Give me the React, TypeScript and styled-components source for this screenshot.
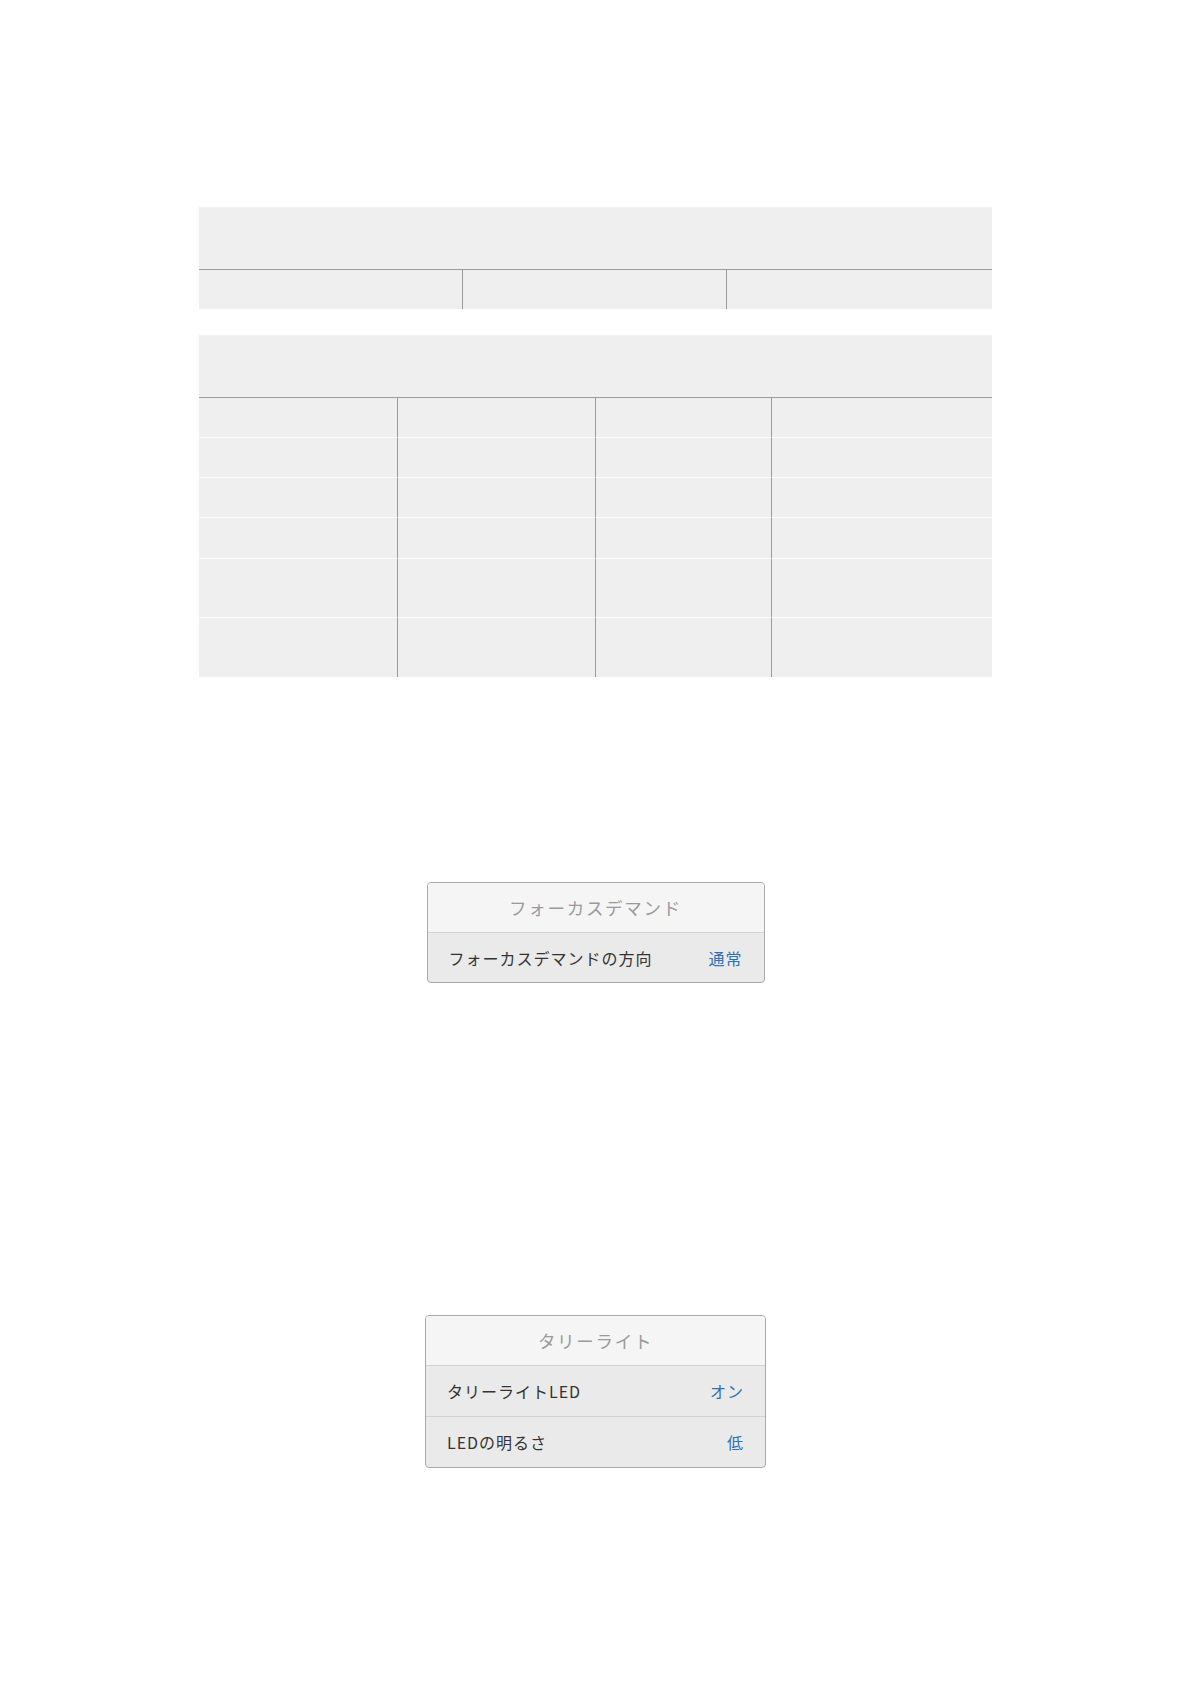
import styled, { createGlobalStyle } from "styled-components";
import { FC } from "react";

const GlobalStyle = createGlobalStyle`
    html, body {
        margin: 0;
        padding: 0;
        background: #ffffff;
    }
    body {
        font-family: "Noto Sans CJK JP", "Noto Sans", sans-serif;
    }
`

const topTable = { cols: [264, 264, 265], rows: [39] }
const bottomTable = { cols: [199, 198, 176, 220], rows: [39, 39, 39, 40, 58, 59] }

const focusRows = [{ label: "フォーカスデマンドの方向", value: "通常" }]
const tallyRows = [
    { label: "タリーライトLED", value: "オン" },
    { label: "LEDの明るさ", value: "低" },
]

const BlankTable: FC<{ cols: number[], rows: number[] }> = ({ cols, rows }) => (<Table>
    <TableHead />
    <TableBody $cols={cols}>
        {rows.map((h, r) => cols.map((_, c) => (
            <Cell key={`${r}-${c}`} $height={h} $first={r === 0} $last={c === cols.length - 1} />
        )))}
    </TableBody>
</Table>)

const MenuPanel: FC<{ title: string, width: number, rowHeight: number, rows: { label: string, value: string }[] }> = ({ title, width, rowHeight, rows }) => (
    <Panel $width={width}>
        <PanelTitle>{title}</PanelTitle>
        {rows.map(row => (
            <PanelRow key={row.label} $height={rowHeight}>
                <RowLabel>{row.label}</RowLabel>
                <RowValue>{row.value}</RowValue>
            </PanelRow>
        ))}
    </Panel>
)

export default function App() {
    return (<Page>
        <GlobalStyle />
        <BlankTable cols={topTable.cols} rows={topTable.rows} />
        <Spacer $h={26} />
        <BlankTable cols={bottomTable.cols} rows={bottomTable.rows} />
        <Spacer $h={205} />
        <MenuPanel title="フォーカスデマンド" width={338} rowHeight={49} rows={focusRows} />
        <Spacer $h={332} />
        <MenuPanel title="タリーライト" width={341} rowHeight={50} rows={tallyRows} />
    </Page>)
}

const Page = styled.div`
    width: 1191px;
    min-height: 1684px;
    box-sizing: border-box;
    padding-top: 207px;
    display: flex;
    flex-direction: column;
    align-items: center;
`

const Spacer = styled.div<{ $h: number }>`
    height: ${p => p.$h}px;
    flex-shrink: 0;
`

const Table = styled.div`
    width: 793px;
    background: #efefef;
    display: flex;
    flex-direction: column;
`

const TableHead = styled.div`
    height: 62px;
    border-bottom: 1px solid #9c9c9c;
`

const TableBody = styled.div<{ $cols: number[] }>`
    display: grid;
    grid-template-columns: ${p => p.$cols.map(c => `${c}px`).join(" ")};
`

const Cell = styled.div<{ $height: number, $first: boolean, $last: boolean }>`
    height: ${p => p.$height}px;
    border-top: ${p => p.$first ? "none" : "1px solid #fafafa"};
    border-right: ${p => p.$last ? "none" : "1px solid #9a9a9a"};
`

const Panel = styled.div<{ $width: number }>`
    width: ${p => p.$width}px;
    box-sizing: border-box;
    border: 1px solid #a9a9a9;
    border-radius: 4px;
    overflow: hidden;
    background: #eaeaea;
`

const PanelTitle = styled.div`
    height: 49px;
    background: #f5f5f5;
    display: flex;
    align-items: center;
    justify-content: center;
    font-size: 17.5px;
    letter-spacing: 1.7px;
    color: #9a9a9a;
`

const PanelRow = styled.div<{ $height: number }>`
    height: ${p => p.$height}px;
    border-top: 1px solid #d2d2d2;
    padding: 0 21px 0 21px;
    display: flex;
    align-items: center;
    justify-content: space-between;
    font-size: 16px;
    letter-spacing: 1px;
`

const RowLabel = styled.span`
    color: #333333;
`

const RowValue = styled.span`
    color: #2e6fb7;
`
